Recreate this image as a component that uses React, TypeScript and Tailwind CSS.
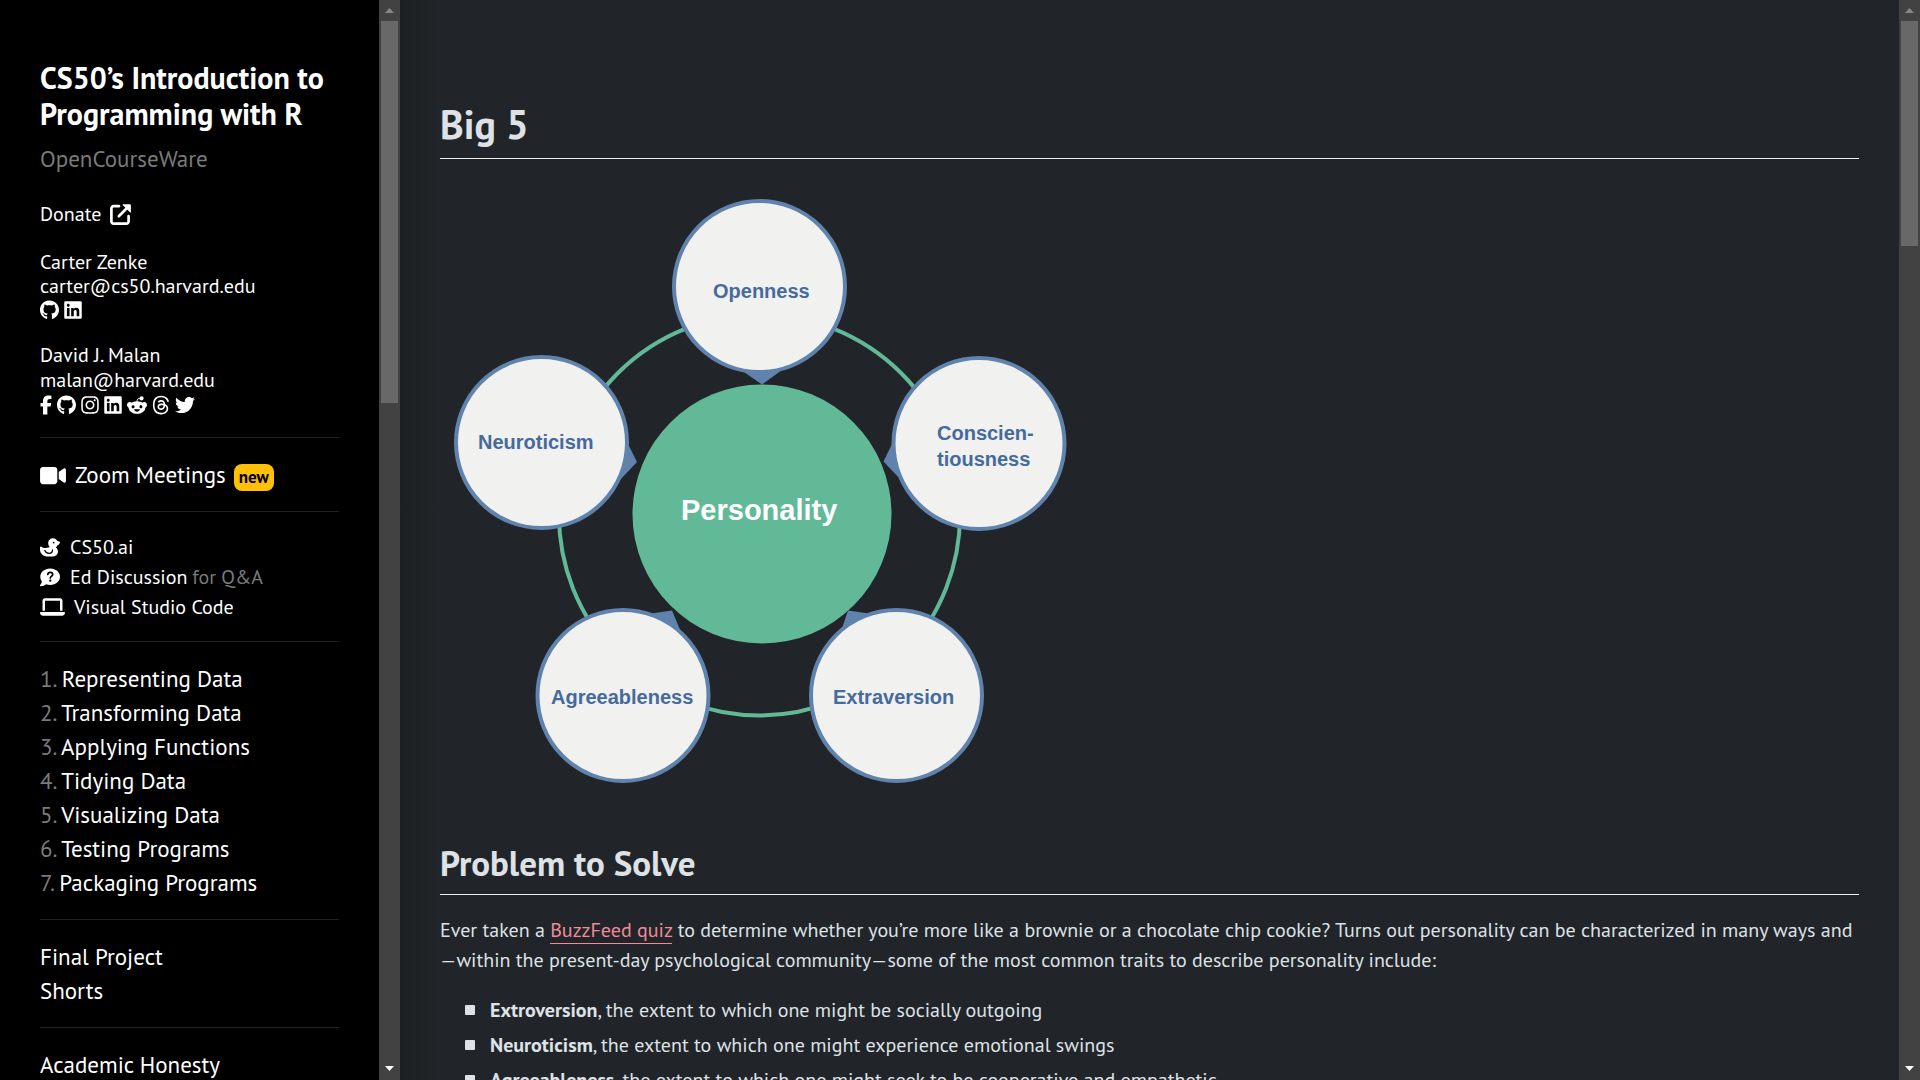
import type { ReactNode } from "react";
import {
  FaFacebookF,
  FaGithub,
  FaInstagram,
  FaLaptop,
  FaLinkedin,
  FaRedditAlien,
  FaThreads,
  FaTwitter,
  FaVideo,
} from "react-icons/fa6";

const lectures = [
  "Representing Data",
  "Transforming Data",
  "Applying Functions",
  "Tidying Data",
  "Visualizing Data",
  "Testing Programs",
  "Packaging Programs",
];

const traits = [
  { name: "Extroversion", text: "the extent to which one might be socially outgoing" },
  { name: "Neuroticism", text: "the extent to which one might experience emotional swings" },
  { name: "Agreeableness", text: "the extent to which one might seek to be cooperative and empathetic" },
];

function ExternalIcon() {
  return (
    <svg viewBox="0 0 21 21" className="h-[21px] w-[21px]" aria-hidden="true">
      <path d="M9 2.2H3.6A2.2 2.2 0 0 0 1.4 4.4v13a2.2 2.2 0 0 0 2.2 2.2h12.8a2.2 2.2 0 0 0 2.2-2.2v-5.2" fill="none" stroke="currentColor" strokeWidth="2.7" strokeLinecap="round" />
      <path d="M8.8 12.2 17 4" fill="none" stroke="currentColor" strokeWidth="2.7" strokeLinecap="round" />
      <path d="M13.2.2h6.600c.7 0 1.100.4 1.100 1.100v6.600c0 .6-.6.8-1 .4l-7-7c-.5-.5-.3-1.100.300-1.100z" fill="currentColor" />
    </svg>
  );
}

function DuckIcon() {
  return (
    <svg viewBox="0 0 20 19" className="h-[19px] w-5" aria-hidden="true">
      <path
        d="M13 .3c2 0 3.700 1.100 4.400 2.800L20 3.800c0 1.900-1.100 3.200-2.800 3.600-.3.800-.8 1.500-1.400 2.100 1.500 1 2.200 2.300 2.200 3.900 0 3-2.500 5.200-6 5.200H8.200C3.200 18.600 0 15.300 0 11.200V9.300c0-.7.8-1 1.300-.6 1.300 1 2.900 1.400 4.700 1.200 1.400-.1 3-.3 4-.8C8.900 8.200 8.200 6.800 8.200 5.200 8.200 2.400 10.300.3 13 .3z"
        fill="currentColor"
      />
      <circle cx="13.600" cy="4.600" r="0.900" fill="#000" />
      <path d="M4.800 12.400c.6 1.900 2.200 2.900 4.200 2.900 2.100 0 3.500-1.300 3.500-3.400" fill="none" stroke="#000" strokeWidth="1.300" strokeLinecap="round" />
    </svg>
  );
}

function QuestionIcon() {
  return (
    <svg viewBox="0 0 20 19" className="h-[19px] w-5" aria-hidden="true">
      <path
        d="M10.200.5C15.700.5 20 4.100 20 8.700s-4.300 8.200-9.800 8.200c-1.400 0-2.700-.2-3.900-.7-1.600 1.100-3.600 2-5.600 2-.7 0-.9-.7-.5-1.200.9-1 1.500-2.200 1.700-3.500C.9 12.200.3 10.500.3 8.700.3 4.100 4.700.5 10.200.5z"
        fill="currentColor"
      />
      <path d="M7.800 6.500c.1-1.300 1-2.100 2.400-2.100s2.500.8 2.500 2.100c0 1.700-2.400 1.700-2.400 3.500" fill="none" stroke="#000" strokeWidth="1.700" strokeLinecap="round" />
      <circle cx="10.300" cy="12.700" r="1.150" fill="#000" />
    </svg>
  );
}

function Rule() {
  return <hr className="mt-[19px] mb-5 border-t border-[#212121]" />;
}

function Social({ label, children }: { label: string; children: ReactNode }) {
  return (
    <a href="#" aria-label={label}>
      {children}
    </a>
  );
}

function Scrollbar({ thumb }: { thumb: string }) {
  return (
    <div className="flex h-full w-[21px] shrink-0 flex-col items-center bg-[#424242]" aria-hidden="true">
      <div className="flex h-[21px] w-full shrink-0 items-center justify-center">
        <svg viewBox="0 0 9 5" className="h-[5px] w-[9px]">
          <path d="M4.500 0 9 5H0z" fill="#868686" />
        </svg>
      </div>
      <div className="flex min-h-0 w-full flex-1 justify-center">
        <div className={`w-[17px] bg-[#686868] ${thumb}`} />
      </div>
      <div className="flex h-[23px] w-full shrink-0 items-center justify-center">
        <svg viewBox="0 0 9 5" className="h-[5px] w-[9px]">
          <path d="M0 0h9L4.500 5z" fill="#fff" />
        </svg>
      </div>
    </div>
  );
}

function Sidebar() {
  return (
    <aside className="flex w-[400px] shrink-0 bg-black text-white">
      <div className="min-w-0 flex-1 overflow-hidden px-10 pt-[60px]">
        <h1 className="text-[30px] leading-9 font-bold">
          <a href="#">CS50’s Introduction to Programming with R</a>
        </h1>
        <p className="mt-[10px] text-[23px] leading-[34px] text-[#7a7a7a]">OpenCourseWare</p>
        <a href="#" className="mt-6 flex items-center gap-[9px] leading-7">
          Donate <ExternalIcon />
        </a>
        <div className="mt-[22px] leading-6">
          <a href="#" className="block">Carter Zenke</a>
          <a href="#" className="block">carter@cs50.harvard.edu</a>
          <div className="mt-[2px] flex gap-[5px]">
            <Social label="GitHub"><FaGithub className="h-5 w-[19px]" /></Social>
            <Social label="LinkedIn"><FaLinkedin className="h-5 w-[18px]" /></Social>
          </div>
        </div>
        <div className="mt-[23px] pb-[3px] leading-[25px]">
          <a href="#" className="block">David J. Malan</a>
          <a href="#" className="block">malan@harvard.edu</a>
          <div className="mt-[2px] flex gap-[5px]">
            <Social label="Facebook"><FaFacebookF className="h-5 w-3" /></Social>
            <Social label="GitHub"><FaGithub className="h-5 w-[19px]" /></Social>
            <Social label="Instagram"><FaInstagram className="h-5 w-[18px]" /></Social>
            <Social label="LinkedIn"><FaLinkedin className="h-5 w-[18px]" /></Social>
            <Social label="Reddit"><FaRedditAlien className="h-5 w-5" /></Social>
            <Social label="Threads"><FaThreads className="h-5 w-[18px]" /></Social>
            <Social label="Twitter"><FaTwitter className="h-5 w-5" /></Social>
          </div>
        </div>
        <Rule />
        <a href="#" className="flex items-center text-[23px] leading-[34px]">
          <FaVideo className="h-[23px] w-[26px]" />
          <span className="ml-[9px]">Zoom Meetings</span>
          <span className="mt-1 ml-2 rounded-lg bg-[#ffc107] px-[5px] text-[17px] leading-[27px] font-bold text-black">new</span>
        </a>
        <Rule />
        <ul className="leading-[30px]">
          <li>
            <a href="#" className="flex items-center gap-[10px]"><DuckIcon />CS50.ai</a>
          </li>
          <li className="flex items-center gap-[5px]">
            <a href="#" className="flex items-center gap-[10px]"><QuestionIcon />Ed Discussion</a>
            <span className="text-[#7a7a7a]">for Q&amp;A</span>
          </li>
          <li>
            <a href="#" className="flex items-center gap-[9px]"><FaLaptop className="h-5 w-[25px]" />Visual Studio Code</a>
          </li>
        </ul>
        <Rule />
        <ol className="text-[23px] leading-[34px]">
          {lectures.map((name, i) => (
            <li key={name}>
              <span className="text-[#7a7a7a]">{i + 1}.</span> <a href="#">{name}</a>
            </li>
          ))}
        </ol>
        <Rule />
        <ul className="text-[23px] leading-[34px]">
          <li><a href="#">Final Project</a></li>
          <li><a href="#">Shorts</a></li>
        </ul>
        <Rule />
        <ul className="text-[23px] leading-[34px]">
          <li><a href="#">Academic Honesty</a></li>
        </ul>
      </div>
      <Scrollbar thumb="h-[382px]" />
    </aside>
  );
}

function PersonalityChart() {
  return (
    <svg
      viewBox="440 180 640 620"
      className="block h-auto w-[640px] max-w-full"
      role="img"
      aria-label="The five personality traits around a central circle"
    >
      <circle cx="759.500" cy="515" r="200.500" fill="none" stroke="#61b998" strokeWidth="4" />
      <g fill="#5f83ac">
        <path d="M741 370h41l-20 14.500z" />
        <path d="M627 442l10 20-18 19z" />
        <path d="M893 442l-9.500 19.500 18 19z" />
        <path d="M648 614l24-3.500 10 24z" />
        <path d="M872 614l-24-3.500-8 24z" />
      </g>
      <circle cx="762" cy="514" r="129.500" fill="#61b998" />
      <g fill="#f1f1ef" stroke="#5f83ac" strokeWidth="4">
        <circle cx="759.500" cy="286.500" r="85.500" />
        <circle cx="541.500" cy="442.500" r="85.500" />
        <circle cx="979" cy="443.500" r="85.500" />
        <circle cx="623" cy="695.500" r="85.500" />
        <circle cx="896.500" cy="695.500" r="85.500" />
      </g>
      <g className="font-['Liberation_Sans',sans-serif] text-[20px] font-bold" fill="#456a9d">
        <text x="713" y="298">Openness</text>
        <text x="478" y="449">Neuroticism</text>
        <text x="937" y="440">Conscien-</text>
        <text x="937" y="466">tiousness</text>
        <text x="551" y="704">Agreeableness</text>
        <text x="833" y="704">Extraversion</text>
      </g>
      <text x="681" y="520" fill="#fff" className="font-['Liberation_Sans',sans-serif] text-[29px] font-bold">
        Personality
      </text>
    </svg>
  );
}

export default function App() {
  return (
    <div className="flex h-screen overflow-hidden bg-[#212529] font-['PT_Sans',Lato,sans-serif] text-[20px] text-[#dee2e6]">
      <Sidebar />
      <div className="w-10 shrink-0 bg-linear-to-r from-[#1c2023] to-[#212529]" />
      <main className="min-w-0 flex-1 overflow-hidden pt-[100px] pr-10">
        <h1 className="border-b border-[#eceeec] pb-[10px] text-[40px] leading-[48px] font-bold">Big 5</h1>
        <div className="mt-[21px]">
          <PersonalityChart />
        </div>
        <h2 className="mt-[42px] border-b border-[#eceeec] pb-[10px] text-[35px] leading-[42px] font-bold">Problem to Solve</h2>
        <p className="mt-5 leading-[30px]">
          Ever taken a{" "}
          <a href="#" className="border-b border-[#f08c98] text-[#f08c98]">BuzzFeed quiz</a> to determine whether you’re more like a brownie or a
          chocolate chip cookie? Turns out personality can be characterized in many ways and—within the present-day psychological community—some of
          the most common traits to describe personality include:
        </p>
        <ul className="mt-5 flex flex-col gap-[5px] pl-[25px] leading-[30px]">
          {traits.map((trait) => (
            <li key={trait.name} className="flex items-center gap-[15px]">
              <span className="h-[10px] w-[10px] shrink-0 rounded-[1px] bg-[#dee2e6]" />
              <span>
                <strong>{trait.name}</strong>, {trait.text}
              </span>
            </li>
          ))}
        </ul>
      </main>
      <Scrollbar thumb="h-[225px]" />
    </div>
  );
}
